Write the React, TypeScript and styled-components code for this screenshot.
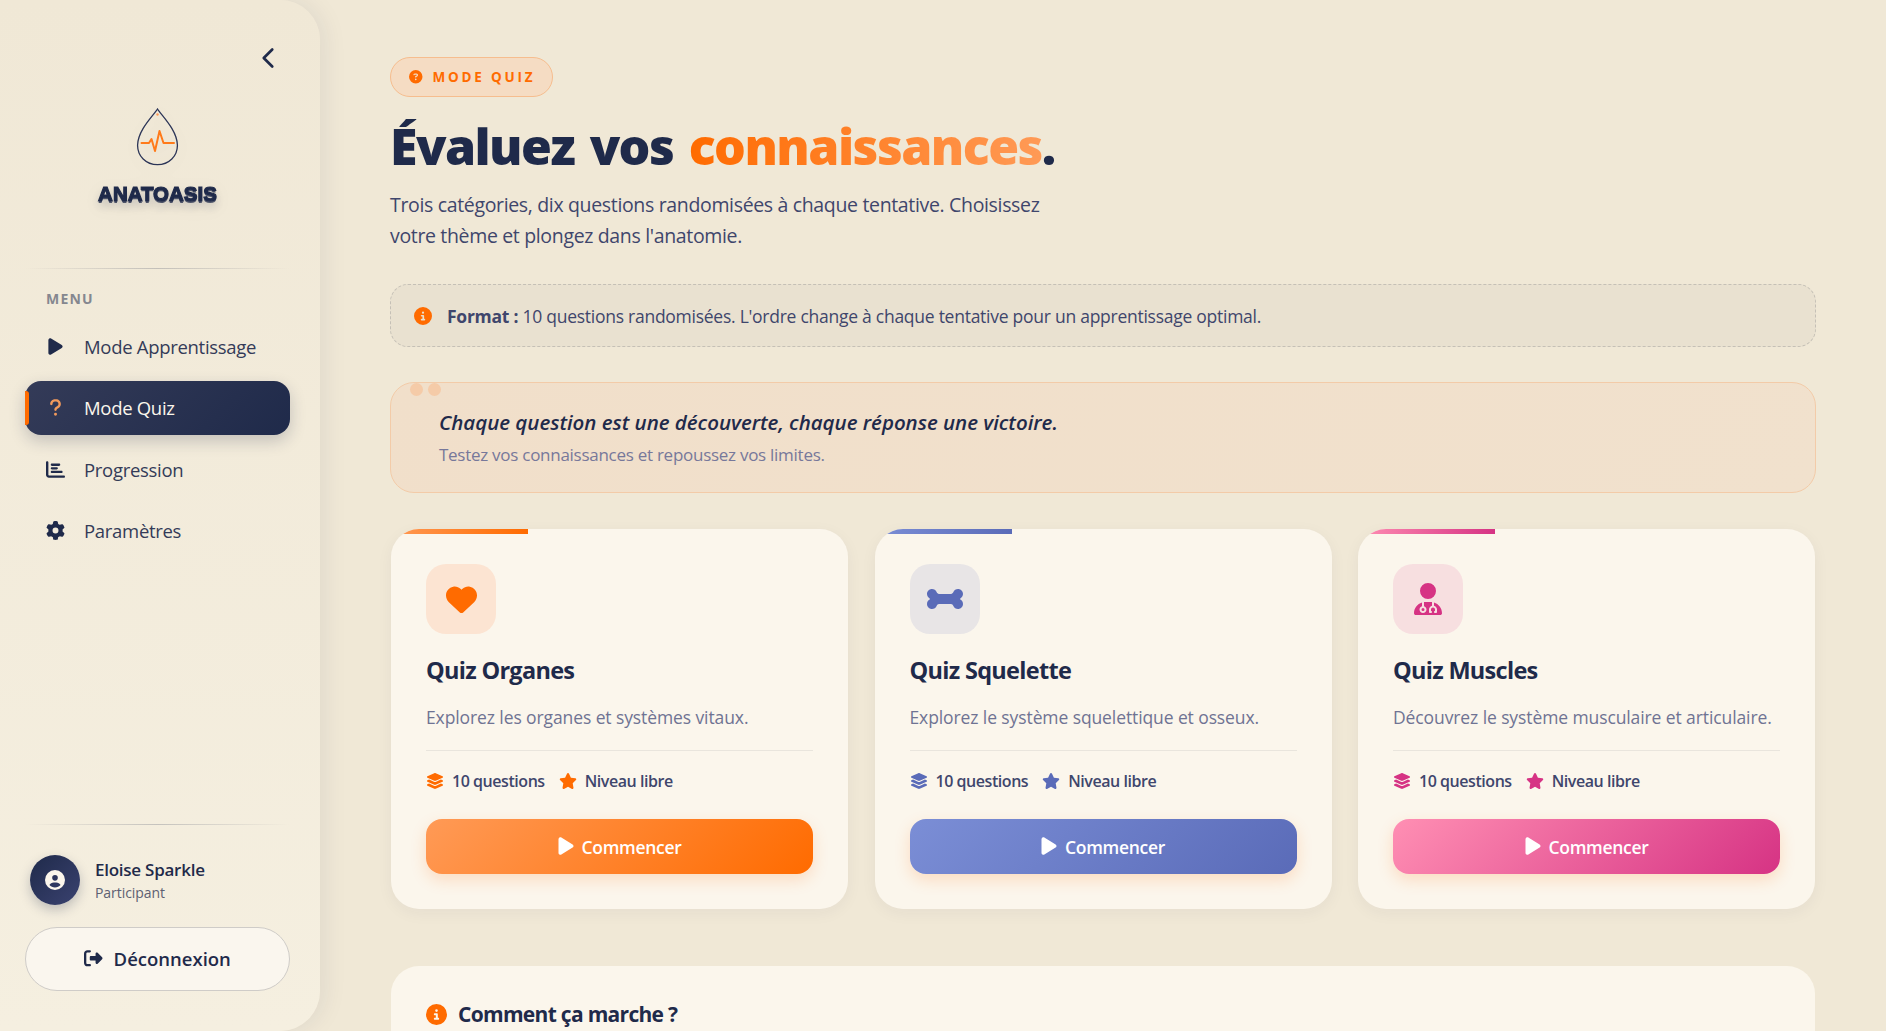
import React from "react";
import styled, { createGlobalStyle } from "styled-components";
import { ChevronLeft } from "lucide-react";
import {
  FaBone,
  FaChartBar,
  FaCircleInfo,
  FaCircleQuestion,
  FaCircleUser,
  FaGear,
  FaHeart,
  FaLayerGroup,
  FaPlay,
  FaQuestion,
  FaRightFromBracket,
  FaStar,
  FaUserDoctor,
} from "react-icons/fa6";

const FONT = `"Open Sans", "Noto Sans", sans-serif`;
const NAVY = "#1f2a4a";
const ORANGE = "#ff6b00";

const GlobalStyle = createGlobalStyle`
  * { box-sizing: border-box; }
  html, body { margin: 0; height: 100%; overflow: hidden; }
  body { background: #f0e8d6; font-family: ${FONT}; color: ${NAVY}; }
`;

const Layout = styled.div`
  display: flex;
  height: 100vh;
  overflow: hidden;
`;

const Sidebar = styled.aside`
  flex: 0 0 320px;
  display: flex;
  flex-direction: column;
  padding: 0 30px 40px 25px;
  background: linear-gradient(180deg, #f0e8d6 0%, #f5efe0 100%);
  border-radius: 0 40px 40px 0;
  box-shadow: 4px 0 24px rgba(31, 42, 74, 0.08);
`;

const CollapseButton = styled.div`
  align-self: flex-end;
  display: flex;
  margin: 41px 5px 0 0;
  color: ${NAVY};
`;

const Brand = styled.div`
  display: flex;
  flex-direction: column;
  align-items: center;
  margin-top: 33px;
  filter: drop-shadow(0 4px 8px rgba(31, 42, 74, 0.06));
`;

const BrandName = styled.div`
  margin-top: 15px;
  font-family: "Liberation Sans", sans-serif;
  font-size: 20.5px;
  line-height: 26px;
  font-weight: 700;
  color: ${NAVY};
  -webkit-text-stroke: 1.2px ${NAVY};
  text-shadow: 0 2px 0 rgba(31, 42, 74, 0.75), 0 6px 10px rgba(31, 42, 74, 0.25);
`;

const Divider = styled.div`
  height: 1px;
  background: linear-gradient(90deg, transparent, rgba(31, 42, 74, 0.22), transparent);
`;

const TopDivider = styled(Divider)`
  margin-top: 61px;
`;

const MenuLabel = styled.div`
  margin: 21px 0 0 21px;
  font-size: 14px;
  line-height: 18px;
  font-weight: 700;
  letter-spacing: 1.2px;
  color: #85878f;
`;

const Nav = styled.nav`
  display: flex;
  flex-direction: column;
  gap: 7.5px;
  margin-top: 11px;
`;

const NavItem = styled.div<{ $active?: boolean }>`
  position: relative;
  display: flex;
  align-items: center;
  height: 54px;
  padding-left: 21px;
  border-radius: 16px;
  font-size: 18.5px;
  letter-spacing: -0.3px;
  color: ${({ $active }) => ($active ? "#fbf6ec" : "#343b58")};
  background: ${({ $active }) =>
    $active ? "linear-gradient(135deg, #343b58 0%, #1f2a4a 100%)" : "transparent"};
  box-shadow: ${({ $active }) => ($active ? "0 6px 16px rgba(31, 42, 74, 0.22)" : "none")};
  ${({ $active }) =>
    $active &&
    `&::before {
      content: "";
      position: absolute;
      left: 0;
      top: 10px;
      bottom: 10px;
      width: 4px;
      border-radius: 0 3px 3px 0;
      background: ${ORANGE};
    }`}
`;

const NavIcon = styled.span<{ $active?: boolean }>`
  display: flex;
  justify-content: center;
  width: 19px;
  margin-right: 19px;
  font-size: 19px;
  color: ${({ $active }) => ($active ? "#f29a5c" : NAVY)};
`;

const SidebarFoot = styled.div`
  margin-top: auto;
`;

const UserRow = styled.div`
  display: flex;
  align-items: center;
  gap: 15px;
  margin: 30px 0 22px 5px;
`;

const Avatar = styled.div`
  display: flex;
  align-items: center;
  justify-content: center;
  width: 50px;
  height: 50px;
  border-radius: 50%;
  font-size: 20px;
  color: #fbf6ec;
  background: linear-gradient(135deg, #1f2a4a, #3a4270);
  box-shadow: 0 5px 12px rgba(31, 42, 74, 0.25);
`;

const UserInfo = styled.div`
  padding-top: 2px;
`;

const UserName = styled.div`
  font-size: 17px;
  line-height: 22px;
  font-weight: 600;
  letter-spacing: -0.25px;
  color: ${NAVY};
`;

const UserRole = styled.div`
  margin-top: 2px;
  font-size: 14px;
  line-height: 20px;
  letter-spacing: -0.05px;
  color: #5d6072;
`;

const LogoutButton = styled.div`
  display: flex;
  align-items: center;
  justify-content: center;
  gap: 11px;
  height: 64px;
  padding-bottom: 1px;
  border: 1px solid #cfccc8;
  border-radius: 32px;
  background: #faf6ee;
  font-size: 18.5px;
  font-weight: 600;
  color: ${NAVY};
`;

const Main = styled.main`
  flex: 1;
  min-width: 0;
  padding: 57px 70px 0;
  overflow: hidden;
`;

const Badge = styled.div`
  display: inline-flex;
  align-items: center;
  gap: 10px;
  height: 40px;
  padding: 0 17px 0 18px;
  border: 1px solid #f6bd8e;
  border-radius: 20px;
  background: #f5dcc3;
  font-size: 13.5px;
  font-weight: 700;
  letter-spacing: 2.8px;
  color: ${ORANGE};
`;

const Title = styled.h1`
  margin: 15px 0 0;
  font-size: 50px;
  line-height: 68px;
  font-weight: 800;
  letter-spacing: -1.55px;
  word-spacing: 4px;
  color: ${NAVY};
`;

const TitleAccent = styled.span`
  background: linear-gradient(90deg, ${ORANGE}, #ff9a56);
  -webkit-background-clip: text;
  background-clip: text;
  color: transparent;
`;

const Lead = styled.p`
  width: 680px;
  margin: 9px 0 0;
  font-size: 19.5px;
  line-height: 31px;
  letter-spacing: -0.34px;
  color: #3f466c;
`;

const InfoBox = styled.div`
  display: flex;
  align-items: center;
  gap: 15px;
  height: 63px;
  margin-top: 33px;
  padding: 0 23px;
  border: 1px dashed #c5c0b6;
  border-radius: 18px;
  background: #e9e1d0;
  font-size: 17.5px;
  letter-spacing: -0.26px;
  color: #3f466c;
`;

const InfoGlyph = styled.span`
  display: flex;
  font-size: 18px;
  color: ${ORANGE};
`;

const QuoteBox = styled.div`
  position: relative;
  height: 111px;
  margin-top: 35px;
  padding: 25px 48px 0;
  border: 1px solid #f3cba8;
  border-radius: 24px;
  background: linear-gradient(135deg, #f1dfca, #f1e1cd);
  overflow: hidden;
  &::before {
    content: "";
    position: absolute;
    top: 0;
    left: 19px;
    width: 13px;
    height: 13px;
    border-radius: 50%;
    background: #f5cba8;
    box-shadow: 18px 0 0 #f5cba8;
  }
`;

const QuoteText = styled.div`
  font-size: 20.5px;
  line-height: 28px;
  font-style: italic;
  font-weight: 600;
  letter-spacing: -0.03px;
  color: ${NAVY};
`;

const QuoteSub = styled.div`
  margin-top: 7px;
  font-size: 17px;
  line-height: 24px;
  letter-spacing: -0.27px;
  color: #77789a;
`;

const CardGrid = styled.div`
  display: grid;
  grid-template-columns: repeat(3, 1fr);
  gap: 26.5px;
  margin: 36px 1px 0;
`;

const Card = styled.section`
  position: relative;
  height: 380px;
  padding: 35px;
  border-radius: 28px;
  background: #fbf6ec;
  box-shadow: 0 4px 16px rgba(31, 42, 74, 0.05);
  overflow: hidden;
`;

const CardAccent = styled.div<{ $from: string; $to: string }>`
  position: absolute;
  top: 0;
  left: 0;
  width: 30%;
  height: 5px;
  background: linear-gradient(90deg, ${({ $from }) => $from}, ${({ $to }) => $to});
`;

const CardIcon = styled.div<{ $tint: string; $color: string; $size: number }>`
  display: flex;
  align-items: center;
  justify-content: center;
  width: 70px;
  height: 70px;
  border-radius: 20px;
  font-size: ${({ $size }) => $size}px;
  background: ${({ $tint }) => $tint};
  color: ${({ $color }) => $color};
`;

const CardTitle = styled.h3`
  margin: 19px 0 0;
  font-size: 23.5px;
  line-height: 34px;
  font-weight: 700;
  letter-spacing: -0.7px;
  color: ${NAVY};
`;

const CardText = styled.p`
  margin: 17px 0 0;
  padding-bottom: 20px;
  border-bottom: 1px solid #e9e5dd;
  font-size: 17.5px;
  line-height: 26px;
  letter-spacing: -0.1px;
  color: #6f7393;
`;

const MetaRow = styled.div<{ $color: string }>`
  display: flex;
  align-items: center;
  gap: 14px;
  margin-top: 19px;
  font-size: 16px;
  line-height: 22px;
  font-weight: 600;
  letter-spacing: -0.45px;
  color: #3f466c;
  svg {
    color: ${({ $color }) => $color};
    font-size: 18px;
  }
`;

const MetaItem = styled.span`
  display: inline-flex;
  align-items: center;
  gap: 8px;
`;

const StartButton = styled.div<{ $from: string; $to: string }>`
  display: flex;
  align-items: center;
  justify-content: center;
  gap: 6px;
  height: 55px;
  margin-top: 27px;
  padding-right: 2px;
  border-radius: 16px;
  background: linear-gradient(135deg, ${({ $from }) => $from}, ${({ $to }) => $to});
  box-shadow: 0 6px 16px rgba(255, 107, 0, 0.18);
  font-size: 17.5px;
  font-weight: 600;
  letter-spacing: -0.3px;
  color: #fff;
  svg {
    font-size: 20px;
    margin-top: -2px;
  }
`;

const HowTo = styled.section`
  height: 200px;
  margin: 57px 1px 0;
  padding: 34px 35px;
  border-radius: 28px;
  background: #fbf6ec;
`;

const HowToTitle = styled.h2`
  display: flex;
  align-items: center;
  gap: 11px;
  margin: 0;
  font-size: 21px;
  line-height: 28px;
  font-weight: 700;
  letter-spacing: -0.7px;
  color: ${NAVY};
  svg {
    font-size: 21px;
    color: ${ORANGE};
  }
`;

const DropLogo = () => (
  <svg width="43" height="58" viewBox="0 0 43 58" fill="none">
    <path
      d="M21.5 1 C17 8 2 22 1.6 37 C1.4 48 10 56.6 21.5 56.6 C33 56.6 41.6 48 41.4 37 C41 22 26 8 21.5 1 Z"
      stroke="#2c3557"
      strokeWidth="1.3"
    />
    <circle cx="21.5" cy="6.5" r="1.2" fill="#ff9a56" />
    <path
      d="M5.5 35 H13 L15.5 31 L19 43 L23.5 23 L27.5 35 H38"
      stroke="#ff7a1a"
      strokeWidth="2"
      strokeLinejoin="round"
      strokeLinecap="round"
    />
  </svg>
);

const NAV_ITEMS = [
  { label: "Mode Apprentissage", icon: <FaPlay /> },
  { label: "Mode Quiz", icon: <FaQuestion />, active: true },
  { label: "Progression", icon: <FaChartBar /> },
  { label: "Paramètres", icon: <FaGear /> },
];

const QUIZZES = [
  {
    title: "Quiz Organes",
    text: "Explorez les organes et systèmes vitaux.",
    icon: <FaHeart />,
    iconSize: 31,
    tint: "#fce4d2",
    color: ORANGE,
    from: "#ff9a56",
    to: "#ff6b00",
  },
  {
    title: "Quiz Squelette",
    text: "Explorez le système squelettique et osseux.",
    icon: <FaBone />,
    iconSize: 36,
    tint: "#e8e5e6",
    color: "#5a6bb8",
    from: "#7b8ed6",
    to: "#5a6bb8",
  },
  {
    title: "Quiz Muscles",
    text: "Découvrez le système musculaire et articulaire.",
    icon: <FaUserDoctor />,
    iconSize: 32,
    tint: "#f7dfe0",
    color: "#d63384",
    from: "#ff8fb3",
    to: "#d63384",
  },
];

export default function App() {
  return (
    <>
      <GlobalStyle />
      <Layout>
        <Sidebar>
          <CollapseButton>
            <ChevronLeft size={34} strokeWidth={1.9} />
          </CollapseButton>
          <Brand>
            <DropLogo />
            <BrandName>ANATOASIS</BrandName>
          </Brand>
          <TopDivider />
          <MenuLabel>MENU</MenuLabel>
          <Nav>
            {NAV_ITEMS.map((item) => (
              <NavItem key={item.label} $active={item.active}>
                <NavIcon $active={item.active}>{item.icon}</NavIcon>
                {item.label}
              </NavItem>
            ))}
          </Nav>
          <SidebarFoot>
            <Divider />
            <UserRow>
              <Avatar>
                <FaCircleUser />
              </Avatar>
              <UserInfo>
                <UserName>Eloise Sparkle</UserName>
                <UserRole>Participant</UserRole>
              </UserInfo>
            </UserRow>
            <LogoutButton>
              <FaRightFromBracket />
              Déconnexion
            </LogoutButton>
          </SidebarFoot>
        </Sidebar>
        <Main>
          <Badge>
            <FaCircleQuestion />
            MODE QUIZ
          </Badge>
          <Title>
            Évaluez vos <TitleAccent>connaissances</TitleAccent>.
          </Title>
          <Lead>
            Trois catégories, dix questions randomisées à chaque tentative. Choisissez votre thème
            et plongez dans l'anatomie.
          </Lead>
          <InfoBox>
            <InfoGlyph>
              <FaCircleInfo />
            </InfoGlyph>
            <span>
              <strong>Format :</strong> 10 questions randomisées. L'ordre change à chaque tentative
              pour un apprentissage optimal.
            </span>
          </InfoBox>
          <QuoteBox>
            <QuoteText>Chaque question est une découverte, chaque réponse une victoire.</QuoteText>
            <QuoteSub>Testez vos connaissances et repoussez vos limites.</QuoteSub>
          </QuoteBox>
          <CardGrid>
            {QUIZZES.map((quiz) => (
              <Card key={quiz.title}>
                <CardAccent $from={quiz.from} $to={quiz.to} />
                <CardIcon $tint={quiz.tint} $color={quiz.color} $size={quiz.iconSize}>
                  {quiz.icon}
                </CardIcon>
                <CardTitle>{quiz.title}</CardTitle>
                <CardText>{quiz.text}</CardText>
                <MetaRow $color={quiz.color}>
                  <MetaItem>
                    <FaLayerGroup />
                    10 questions
                  </MetaItem>
                  <MetaItem>
                    <FaStar />
                    Niveau libre
                  </MetaItem>
                </MetaRow>
                <StartButton $from={quiz.from} $to={quiz.to}>
                  <FaPlay />
                  Commencer
                </StartButton>
              </Card>
            ))}
          </CardGrid>
          <HowTo>
            <HowToTitle>
              <FaCircleInfo />
              Comment ça marche ?
            </HowToTitle>
          </HowTo>
        </Main>
      </Layout>
    </>
  );
}
